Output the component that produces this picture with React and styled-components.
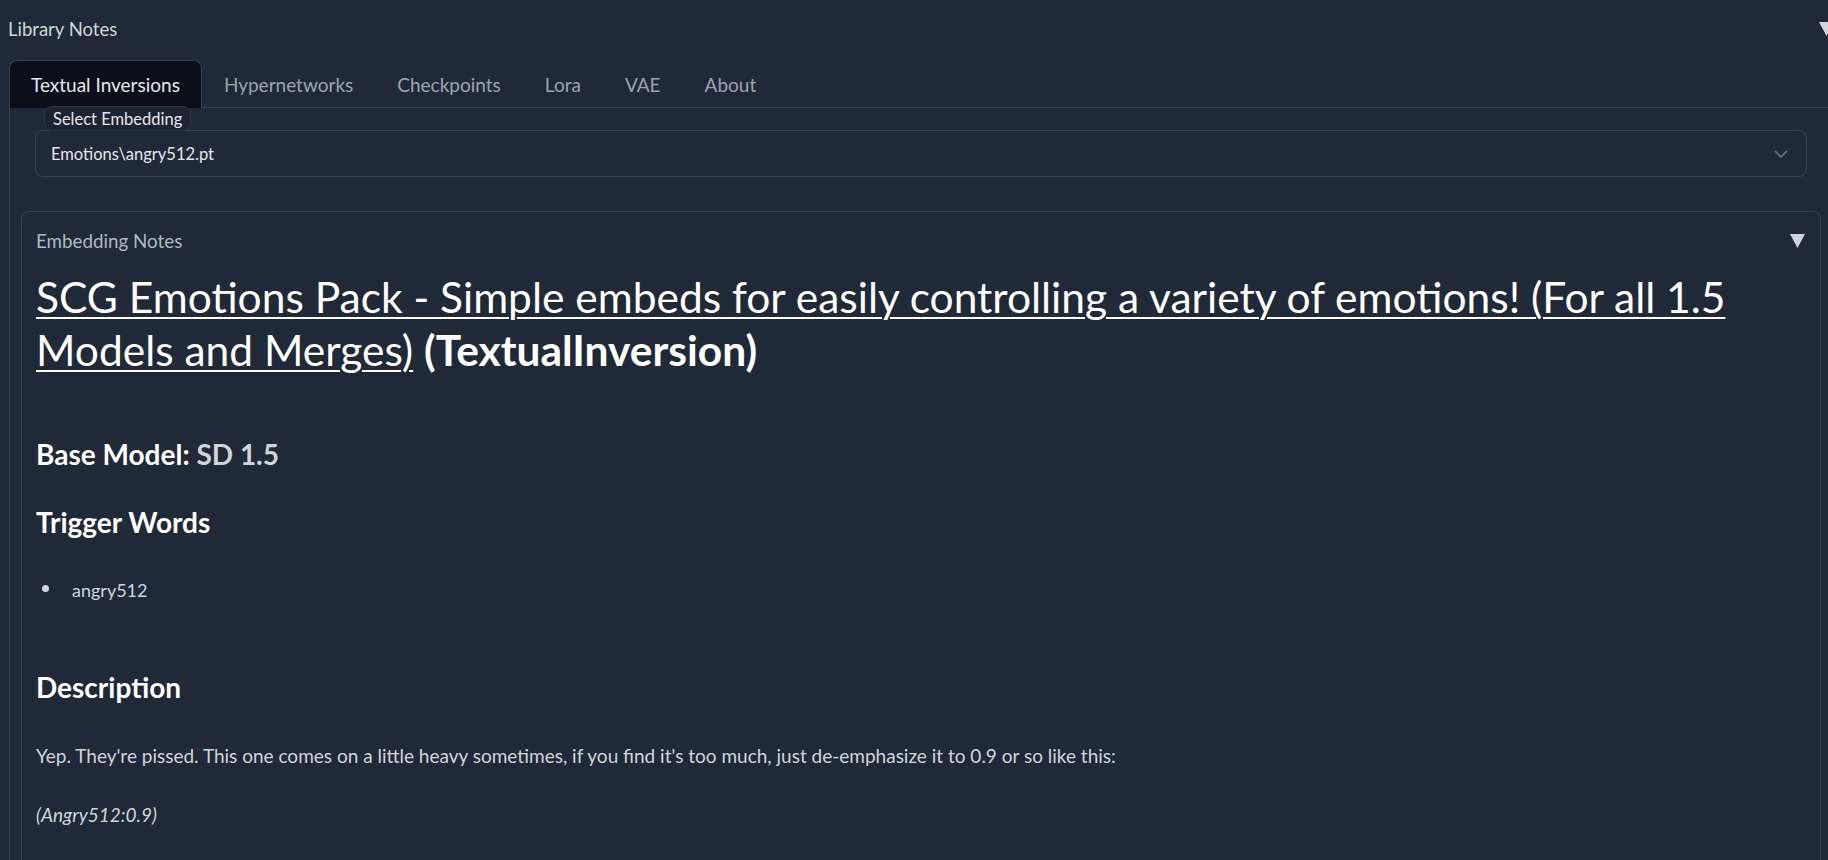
import React from 'react';
import styled, { createGlobalStyle } from 'styled-components';

const GlobalStyle = createGlobalStyle`
  html, body {
    margin: 0;
    background: #1f2937;
    overflow: hidden;
  }
  body {
    font-family: Lato, "Open Sans", sans-serif;
    color: #d1d5db;
  }
`;

const Page = styled.div`
  width: 1842px;
  padding: 17px 9px 0 8px;
  box-sizing: border-box;
`;

const AccordionHeader = styled.div`
  display: flex;
  align-items: center;
  justify-content: space-between;
  height: 24px;
  margin-right: -1px;
  font-size: 18.5px;
  line-height: 24px;
  color: #d1d5db;
`;

const Triangle = styled.svg`
  display: block;
  flex: none;
  width: 15px;
  height: 14px;
  fill: #d1d5db;
`;

const TabBar = styled.div`
  display: flex;
  margin-top: 19px;
  margin-left: 1px;
  border-bottom: 1px solid #374151;
`;

const Tab = styled.button`
  height: 48px;
  margin-bottom: -1px;
  padding: 0 21px;
  box-sizing: border-box;
  font-family: inherit;
  font-size: 19px;
  color: ${(p) => (p.$active ? '#e5e7eb' : '#9ca3af')};
  background: ${(p) => (p.$active ? '#0b0f19' : 'transparent')};
  border: 1px solid ${(p) => (p.$active ? '#374151' : 'transparent')};
  border-bottom: none;
  border-radius: 8px 8px 0 0;
  cursor: pointer;
`;

const TabPanel = styled.div`
  display: flex;
  flex-direction: column;
  gap: 34px;
  margin-left: 1px;
  padding: 0 11px 40px;
  border-left: 1px solid #374151;
  border-right: 1px solid #374151;
`;

const Field = styled.div`
  position: relative;
  padding: 22px 14px 0;
`;

const FieldLabel = styled.span`
  position: absolute;
  top: -2px;
  left: 23px;
  height: 25px;
  padding: 0 8px;
  box-sizing: border-box;
  display: flex;
  align-items: center;
  font-size: 16.5px;
  color: #e5e7eb;
  background: #1c2331;
  border: 1px solid #2b3441;
  border-radius: 8px;
`;

const Select = styled.div`
  height: 47px;
  box-sizing: border-box;
  display: flex;
  align-items: center;
  justify-content: space-between;
  padding: 0 16px 0 15px;
  font-size: 16.5px;
  color: #e5e7eb;
  border: 1px solid #374151;
  border-radius: 8px;
`;

const Chevron = styled.svg`
  width: 16px;
  height: 10px;
  margin-right: 1px;
  stroke: #6b7280;
  fill: none;
  stroke-width: 1.6;
`;

const NotesBlock = styled.div`
  border: 1px solid #374151;
  border-radius: 8px;
  padding: 16px 15px 0 14px;
  min-height: 700px;
`;

const NotesHeader = styled.div`
  display: flex;
  align-items: center;
  justify-content: space-between;
  height: 26px;
  line-height: 26px;
  font-size: 18.8px;
  color: #b3b8c1;
`;

const Prose = styled.div`
  color: #d1d5db;
`;

const Title = styled.h1`
  margin: 16px 0 0;
  font-size: 42.5px;
  line-height: 53px;
  font-weight: 400;
  color: #ffffff;
`;

const TitleLink = styled.a`
  color: #ffffff;
  text-decoration: underline;
  text-decoration-thickness: 2px;
  text-underline-offset: 4px;
`;

const Heading = styled.h3`
  margin: ${(p) => p.$mt}px 0 0;
  font-size: 28px;
  line-height: 36px;
  font-weight: 700;
  color: #ffffff;
`;

const Muted = styled.span`
  color: #d1d5db;
`;

const List = styled.ul`
  margin: 37px 0 0;
  padding: 0;
  list-style: none;
  font-size: 18px;
  line-height: 27px;
`;

const Item = styled.li`
  display: flex;
  align-items: center;
  gap: 23px;
`;

const Bullet = styled.span`
  flex: none;
  width: 7px;
  height: 7px;
  margin: 0 0 4px 6px;
  border-radius: 50%;
  background: #d1d5db;
`;

const Para = styled.p`
  margin: ${(p) => p.$mt}px 0 0;
  font-size: 19px;
  line-height: 28px;
  font-style: ${(p) => (p.$italic ? 'italic' : 'normal')};
`;

const tabs = ['Textual Inversions', 'Hypernetworks', 'Checkpoints', 'Lora', 'VAE', 'About'];

const DownTriangle = () => (
  <Triangle viewBox="0 0 15 14">
    <polygon points="0,0 15,0 7.5,14" />
  </Triangle>
);

export default function App() {
  return (
    <Page>
      <GlobalStyle />
      <AccordionHeader>
        <span>Library Notes</span>
        <DownTriangle />
      </AccordionHeader>
      <TabBar>
        {tabs.map((t, i) => (
          <Tab key={t} $active={i === 0}>{t}</Tab>
        ))}
      </TabBar>
      <TabPanel>
        <Field>
          <FieldLabel>Select Embedding</FieldLabel>
          <Select>
            <span>Emotions\angry512.pt</span>
            <Chevron viewBox="0 0 16 10">
              <polyline points="2,2 8,8 14,2" />
            </Chevron>
          </Select>
        </Field>
        <NotesBlock>
          <NotesHeader>
            <span>Embedding Notes</span>
            <DownTriangle />
          </NotesHeader>
          <Prose>
            <Title>
              <TitleLink href="#">
                SCG Emotions Pack - Simple embeds for easily controlling a variety of emotions! (For all 1.5
              </TitleLink>{' '}
              <TitleLink href="#">Models and Merges)</TitleLink>{' '}
              <strong>(TextualInversion)</strong>
            </Title>
            <Heading $mt={60}>
              Base Model: <Muted>SD 1.5</Muted>
            </Heading>
            <Heading $mt={32}>Trigger Words</Heading>
            <List>
              <Item>
                <Bullet />
                <span>angry512</span>
              </Item>
            </List>
            <Heading $mt={65}>Description</Heading>
            <Para $mt={37}>
              Yep. They're pissed. This one comes on a little heavy sometimes, if you find it's too much, just de-emphasize it to 0.9 or so like this:
            </Para>
            <Para $mt={31} $italic>(Angry512:0.9)</Para>
          </Prose>
        </NotesBlock>
      </TabPanel>
    </Page>
  );
}
